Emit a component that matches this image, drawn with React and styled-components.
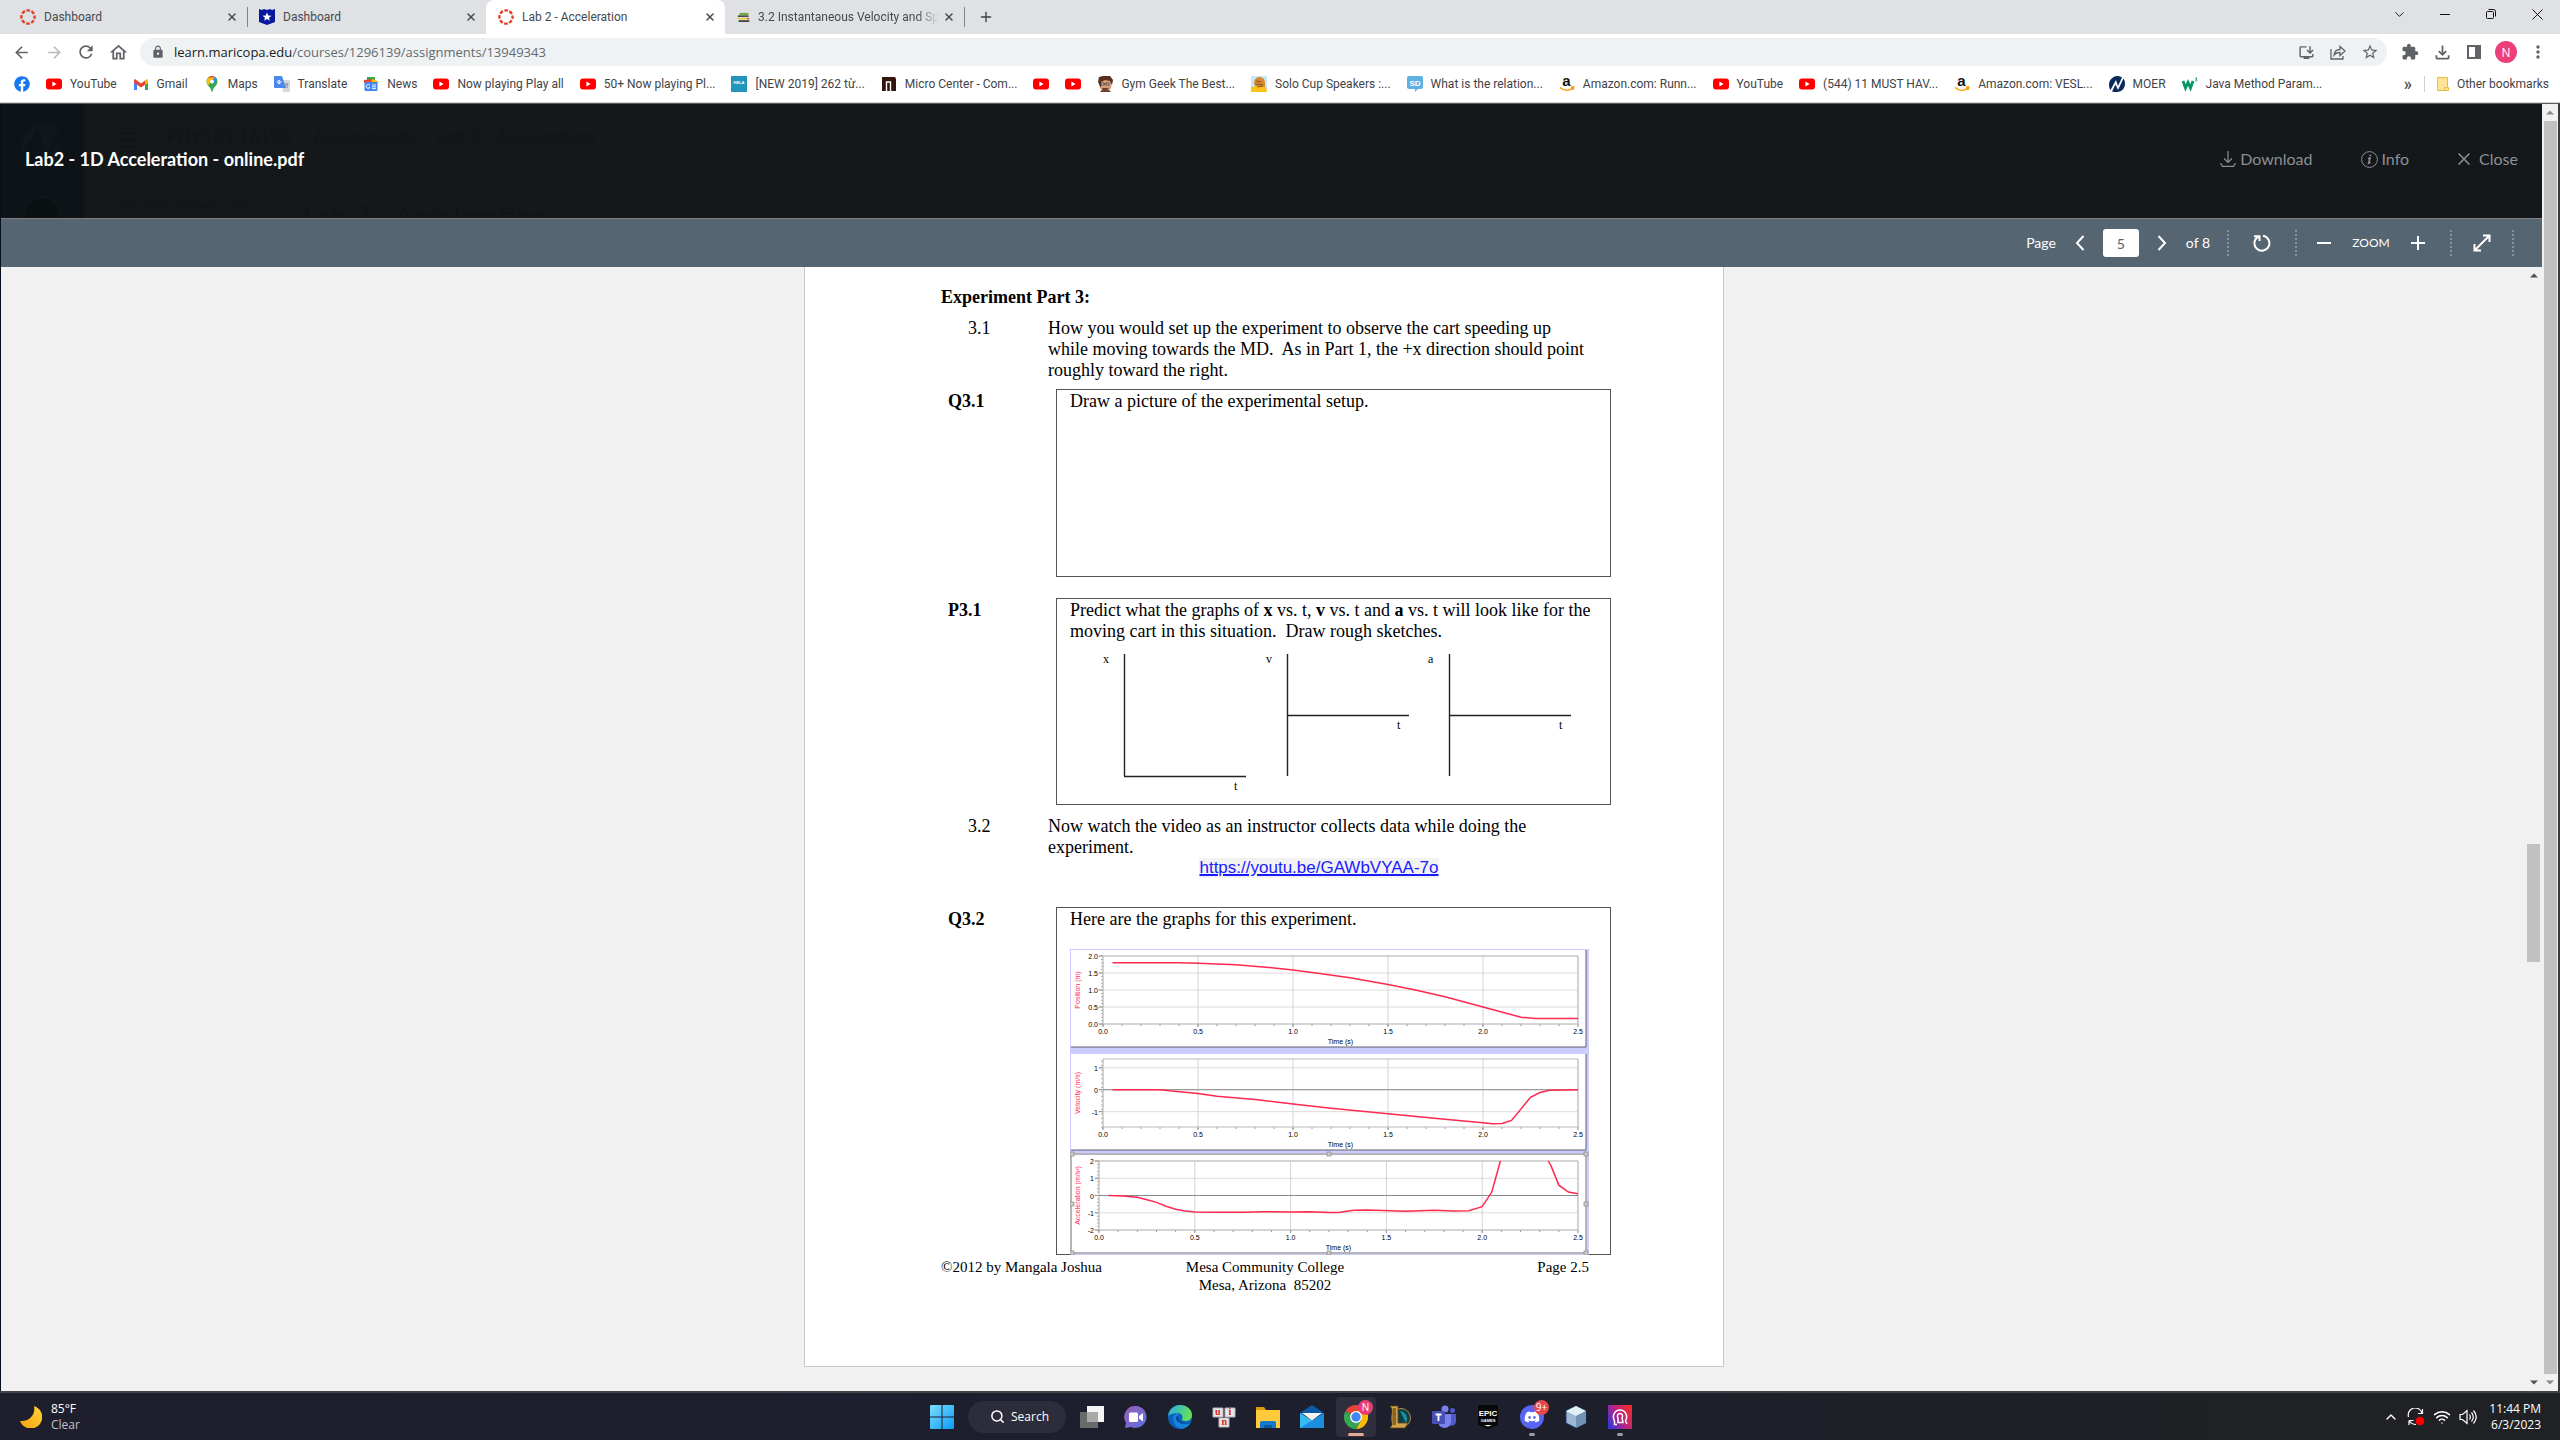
import React from 'react';

import styled, { createGlobalStyle } from 'styled-components';
import {
  MdArrowBack,
  MdArrowForward,
  MdExtension,
  MdInstallDesktop,
  MdLock,
  MdMoreVert,
  MdOutlineFileDownload,
  MdOutlineHome,
  MdRefresh,
  MdStarBorder,
} from 'react-icons/md';
import { FaDiscord, FaFacebook } from 'react-icons/fa';
import { ChevronDown, ChevronUp, Plus, Search, Wifi, X } from 'lucide-react';

const uiFont = '"Open Sans", "Noto Sans", sans-serif';
const tabFont = 'Roboto, "Noto Sans", sans-serif';
const latoFont = 'Lato, "Open Sans", sans-serif';
const serifFont = '"Liberation Serif", "Times New Roman", serif';
const sansFont = '"Liberation Sans", Arial, sans-serif';

const GlobalStyle = createGlobalStyle`
  * {
    box-sizing: border-box;
  }

  body {
    margin: 0;
    font-family: ${uiFont};
    font-size: 12px;
    overflow: hidden;
  }

  button {
    border: 0;
    padding: 0;
    background: none;
    color: inherit;
    font: inherit;
  }

  a {
    color: inherit;
    text-decoration: none;
  }

  h1, p {
    margin: 0;
    font-size: inherit;
  }
`;

const Screen = styled.div`
  display: flex;
  flex-direction: column;
  height: 100vh;
`;

/* ---------- browser chrome ---------- */

const TabStrip = styled.div`
  display: flex;
  align-items: stretch;
  height: 34px;
  padding-left: 8px;
  background: #dfe1e5;
  font-family: ${tabFont};
`;

const Tab = styled.div`
  display: flex;
  align-items: center;
  gap: 8px;
  width: 239px;
  padding: 0 7px 0 12px;
  border-radius: 8px 8px 0 0;
  background: ${({ $active }) => ($active ? '#fff' : 'none')};
  color: #45494d;
`;

const TabTitle = styled.a`
  flex: 1;
  margin-right: -6px;
  white-space: nowrap;
  mask-image: ${({ $fade }) => ($fade ? 'linear-gradient(90deg, #000 88%, transparent)' : 'none')};
`;

const TabDivider = styled.span`
  align-self: center;
  width: 1px;
  height: 20px;
  margin-right: -1px;
  background: #808387;
`;

const IconButton = styled.button`
  display: flex;
  align-items: center;
  justify-content: center;
  width: ${({ $width }) => $width || 16}px;
  height: 28px;
  flex: none;
`;

const NewTab = styled(IconButton)`
  align-self: center;
  margin-left: 8px;
  color: #3c4043;
`;

const WindowControls = styled.div`
  display: flex;
  margin-left: auto;
  color: #111;
`;

const Toolbar = styled.div`
  display: flex;
  align-items: center;
  height: 36px;
  padding: 0 6px 0 5px;
  background: #fff;
  color: #5f6368;
`;

const AddressBar = styled.div`
  display: flex;
  flex: 1;
  align-items: center;
  height: 28px;
  margin: 0 7px 0 6px;
  padding: 0 1px 0 11px;
  border-radius: 14px;
  background: #eef2f3;
`;

const Address = styled.span`
  display: flex;
  flex: 1;
  padding-left: 9px;
  color: #666a6e;
  font-size: 13px;

  b {
    color: #202124;
    font-weight: 400;
  }
`;

const Avatar = styled.span`
  display: flex;
  align-items: center;
  justify-content: center;
  width: 22px;
  height: 22px;
  border-radius: 50%;
  background: #ec407a;
  color: #fff;
`;

const Bookmarks = styled.nav`
  display: flex;
  align-items: center;
  gap: 16px;
  height: 33px;
  padding: 0 11px 4px 14px;
  border-bottom: 1px solid #cfd1d3;
  background: #fff;
  color: #3f4347;
  font-family: ${tabFont};
`;

const Bookmark = styled.a`
  display: flex;
  align-items: center;
  gap: 8px;
  white-space: nowrap;

  svg {
    flex: none;
    overflow: visible;
  }
`;

const BookmarkOverflow = styled.button`
  margin-left: auto;
  font-size: 18px;
  line-height: 16px;
`;

const BookmarkDivider = styled.span`
  width: 1px;
  height: 16px;
  margin: 0 -4px;
  background: #cfd1d3;
`;

/* ---------- page ---------- */

const Page = styled.div`
  display: flex;
  flex: 1;
  min-height: 0;
  border-top: 1px solid #5c5e60;
  border-right: 2px solid #3a3a3c;
  background: #f1f1f1;
`;

const Viewer = styled.main`
  display: flex;
  flex: 1;
  flex-direction: column;
  min-width: 0;
  border-left: 1px solid #04101c;
`;

const ViewerHeader = styled.header`
  position: relative;
  display: flex;
  align-items: center;
  height: 115px;
  padding: 0 24px 4px;
  overflow: hidden;
  border-bottom: 1px solid #837f80;
  background: #14181b;
  color: #8d8f91;
  font: 16px/20px ${latoFont};
`;

/* the course page that stays faintly visible under the overlay */
const Backdrop = styled.div`
  position: absolute;
  inset: 0;
  color: #111517;

  svg {
    position: absolute;
    left: 0;
    top: 0;
  }
`;

const Crumbs = styled.div`
  position: absolute;
  left: 166px;
  top: 20px;
  font-size: 18px;
  line-height: 24px;
  white-space: pre;
`;

const Term = styled.div`
  position: absolute;
  left: 120px;
  top: 92px;
  font-size: 12px;
  font-style: italic;
`;

const BackdropTitle = styled.div`
  position: absolute;
  left: 302px;
  top: 94px;
  font-size: 28px;
  line-height: 36px;
`;

const FileName = styled.h1`
  position: relative;
  flex: 1;
  color: #fff;
  font-size: 18px;
  font-weight: 700;
`;

const HeaderActions = styled.div`
  position: relative;
  display: flex;
  gap: 48px;
`;

const HeaderAction = styled.button`
  display: flex;
  align-items: center;
  gap: ${({ $gap }) => $gap || 4}px;
`;

const ViewerToolbar = styled.div`
  display: flex;
  align-items: center;
  justify-content: flex-end;
  height: 48px;
  padding-right: 28px;
  background: #566572;
  color: #fff;
  font: 14px/20px ${latoFont};
`;

const PageLabel = styled.label`
  margin-right: 11px;
`;

const PageInput = styled.input`
  width: 36px;
  height: 28px;
  margin: 0 10px;
  padding: 0;
  border: 0;
  border-radius: 3px;
  color: #566572;
  font: 14px/20px ${latoFont};
  text-align: center;
`;

const PageCount = styled.span`
  margin: 0 17px 0 11px;
`;

const ZoomLabel = styled.span`
  width: 38px;
  margin: 0 12px;
  font-size: 12px;
  text-align: center;
`;

const Dots = styled.span`
  height: 26px;
  margin-left: ${({ $before }) => $before || 0}px;
  margin-right: ${({ $after }) => $after || 0}px;
  border-left: 2px dotted #87929b;
`;

const PdfPane = styled.div`
  display: flex;
  flex: 1;
  min-height: 0;
`;

const SheetScroller = styled.div`
  flex: 1;
  padding-left: 2px;
  overflow: hidden;
`;

const Sheet = styled.article`
  width: 920px;
  min-height: 1100px;
  margin: 0 auto;
  padding: 20px 112px 0 136px;
  border: 1px solid #c9c9c9;
  border-top: 0;
  background: #fff;
  color: #000;
  font: 18px/21px ${serifFont};
`;

const Heading = styled.h1`
  font-weight: 700;
`;

const Step = styled.section`
  display: grid;
  grid-template-columns: 80px 550px;
  margin-top: ${({ $top }) => $top}px;
  padding-left: 27px;
`;

const Question = styled.section`
  display: grid;
  grid-template-columns: 108px 555px;
  margin-top: ${({ $top }) => $top}px;
  padding-left: 7px;

  strong {
    padding-top: 2px;
  }
`;

const Answer = styled.div`
  height: ${({ $height }) => $height}px;
  padding: 1px 12px 0 13px;
  border: 1px solid #555;

  svg {
    display: block;
  }
`;

const VideoLink = styled.a`
  justify-self: center;
  grid-column: 2;
  margin-left: -8px;
  background: #f2f2f2;
  color: #1a1aff;
  font: 17px/20px ${sansFont};
  text-decoration: underline;
  text-decoration-thickness: 2px;
`;

const Footer = styled.footer`
  display: grid;
  grid-template-columns: 1fr auto 1fr;
  padding-right: 22px;
  margin-top: 3px;
  font-size: 15px;
  line-height: 18px;
  text-align: center;

  span:first-child {
    text-align: left;
  }

  span:last-child {
    text-align: right;
  }
`;

const Scrollbar = styled.div`
  display: flex;
  flex-direction: column;
  align-items: center;
  width: ${({ $width }) => $width}px;
  padding: 6px 0;
  background: #f1f1f1;
  color: ${({ $arrow }) => $arrow || '#505050'};
`;

/* the thumb sits between two spacers that share the rest of the track */
const Track = styled.div`
  display: flex;
  flex: 1;
  flex-direction: column;
  margin: 6px 0;

  &::before {
    content: '';
    flex: ${({ $before }) => $before || 0};
  }

  &::after {
    content: '';
    flex: ${({ $after }) => $after || 0};
  }
`;

const Thumb = styled.div`
  flex: ${({ $size }) => $size};
  width: 13px;
  background: #c1c1c1;
`;

/* ---------- taskbar ---------- */

const Taskbar = styled.footer`
  display: grid;
  grid-template-columns: 1fr auto 1fr;
  align-items: center;
  height: 49px;
  border-top: 2px solid #434448;
  background: linear-gradient(90deg, #1f1e2d, #1d1f2d 55%, #202124 90%);
  color: #fff;
  font-size: 12px;
  line-height: 16px;
`;

const Weather = styled.button`
  display: flex;
  align-items: center;
  gap: 9px;
  padding-left: 20px;
  text-align: left;

  small {
    display: block;
    color: #c3c3c8;
    font-size: 12px;
  }
`;

const Apps = styled.div`
  display: flex;
  align-items: center;
  gap: 4px;
  padding-left: 2px;
`;

const SearchPill = styled.button`
  display: flex;
  align-items: center;
  gap: 6px;
  width: 98px;
  height: 32px;
  margin: 0 2px;
  padding-left: 22px;
  border-radius: 16px;
  background: #2c2c3a;
`;

const AppButton = styled.button`
  position: relative;
  display: flex;
  align-items: center;
  justify-content: center;
  width: 40px;
  height: 40px;
  border-radius: 4px;
  background: ${({ $active }) => ($active ? '#2e2e3c' : 'none')};

  &::after {
    content: '';
    position: absolute;
    bottom: 1px;
    left: 50%;
    width: ${({ $active }) => ($active ? 16 : 6)}px;
    height: 3px;
    border-radius: 2px;
    background: ${({ $active, $running }) => ($active ? '#e3a896' : $running ? '#9b9ba3' : 'none')};
    transform: translateX(-50%);
  }
`;

const Badge = styled.span`
  position: absolute;
  top: 3px;
  right: 3px;
  width: 15px;
  height: 15px;
  border-radius: 8px;
  background: ${({ $color }) => $color};
  color: #fff;
  font-size: 10px;
  line-height: 15px;
  text-align: center;
`;

const Tray = styled.div`
  display: flex;
  align-items: center;
  justify-content: flex-end;
  gap: 8px;
  padding-right: 19px;
`;

const Clock = styled.time`
  margin-left: 4px;
  text-align: right;
`;

/* ---------- icons ---------- */

const CanvasIcon = () => (
  <svg width="16" height="16" viewBox="0 0 16 16">
    <circle cx="8" cy="8" r="6.6" fill="none" stroke="#e13f29" strokeWidth="2.4" strokeDasharray="3.6 1.58" strokeDashoffset="1.8" />
  </svg>
);

const ShieldStarIcon = () => (
  <svg width="16" height="16" viewBox="0 0 16 16">
    <path d="M0 0l3 1 2-1 3 1 3-1 2 1 3-1v13l-8 3-8-3z" fill="#06189b" />
    <path d="M8 3.500l1.300 3 3.200.2-2.500 2 .8 3.100L8 10.100l-2.800 1.700.8-3.100-2.500-2 3.200-.2z" fill="#fff" />
  </svg>
);

const BooksIcon = () => (
  <svg width="16" height="16" viewBox="0 0 16 16">
    <path d="M3 3h11v3H3z" fill="#6fae3c" />
    <path d="M1 6h13v2H1z" fill="#4b4b4b" />
    <path d="M0 9h12v2H0z" fill="#e9d23c" />
    <path d="M2 12h13v2H2z" fill="#333" />
    <path d="M12 9h3v2h-3z" fill="#d46a43" />
  </svg>
);

const YouTubeIcon = () => (
  <svg width="16" height="16" viewBox="0 0 16 16">
    <rect y="2.500" width="16" height="11" rx="3" fill="#f00" />
    <path d="M6.400 5.500v5l4.200-2.500z" fill="#fff" />
  </svg>
);

const GmailIcon = () => (
  <svg width="16" height="16" viewBox="0 0 16 16">
    <path d="M1 4v10h3V7z" fill="#4285f4" />
    <path d="M15 4v10h-3V7z" fill="#34a853" />
    <path d="M12 4.500l2-1.500 1 1v3l-3 2z" fill="#fbbc04" />
    <path d="M1 4l1-1 2 1.500L8 7.500l4-3V8.700L8 11.500 1 6.500z" fill="#ea4335" />
  </svg>
);

const MapsIcon = () => (
  <svg width="16" height="16" viewBox="0 0 16 16">
    <path d="M8 0a5.500 5.500 0 0 0-5.500 5.500c0 3 2.200 4.500 3.700 6.500.9 1.200 1.200 4 1.800 4s.9-2.800 1.800-4c1.500-2 3.700-3.500 3.700-6.500A5.500 5.500 0 0 0 8 0z" fill="#34a853" />
    <path d="M8 0a5.500 5.500 0 0 0-4.200 2L6.500 4.500 11 .9A5.500 5.500 0 0 0 8 0z" fill="#ea4335" />
    <path d="M11 .9L4.200 9.200 3 7.500A5 5 0 0 1 3.800 2z" fill="#fbbc04" />
    <path d="M11 .9L8 4.500l2 2.500 3-3.500A5 5 0 0 0 11 .9z" fill="#4285f4" />
    <circle cx="8" cy="5.500" r="1.900" fill="#fff" />
  </svg>
);

const TranslateIcon = () => (
  <svg width="16" height="16" viewBox="0 0 16 16">
    <path d="M7 4h8a1 1 0 0 1 1 1v10a1 1 0 0 1-1 1H9z" fill="#d5d9de" />
    <path d="M1 0h7l4 12H1a1 1 0 0 1-1-1V1a1 1 0 0 1 1-1z" fill="#4a88ee" />
    <path d="M7.500 5.800H5v1.200h1.300A1.600 1.600 0 1 1 5 4.400c.5 0 .9.200 1.100.4" fill="none" stroke="#fff" />
    <path d="M10.500 8h4M12.500 7v1m1.300 0c-.4 1.800-1.500 3-2.500 3.800m.200-2.500c.6 1 1.500 2 2.500 2.500" fill="none" stroke="#7b8188" strokeWidth=".8" />
  </svg>
);

const NewsIcon = () => (
  <svg width="16" height="16" viewBox="0 0 16 16">
    <path d="M4 1h8v5H4z" fill="#34a853" />
    <path d="M1 4l9-1 1 4H1z" fill="#ea4335" />
    <path d="M9 3l6 2-1 4H8z" fill="#fbbc04" />
    <rect x="1.500" y="6" width="13" height="9" rx="1" fill="#4285f4" />
    <path d="M7 9.500a2 2 0 1 0 0 2H5.500M9 9h4m-4 1.800h4M9 12.600h4" fill="none" stroke="#fff" strokeWidth=".9" />
  </svg>
);

const HelaIcon = () => (
  <svg width="16" height="16" viewBox="0 0 16 16">
    <path d="M0 0h16v16H0z" fill="#2196bd" />
    <text x="8" y="8" fill="#fff" fontFamily={sansFont} fontSize="4" fontWeight="700" textAnchor="middle">HELA</text>
  </svg>
);

const MicroCenterIcon = () => (
  <svg width="16" height="16" viewBox="0 0 16 16">
    <path d="M1 1h13l1 2v12H1z" fill="#34150c" />
    <path d="M5.500 15V6h4v9" fill="none" stroke="#fff" strokeWidth="1.400" />
  </svg>
);

const GeekIcon = () => (
  <svg width="16" height="16" viewBox="0 0 16 16">
    <path d="M3 2h10l2 4-1 6-3 4H5L2 9z" fill="#d69c74" />
    <path d="M1 6L2 1l4-1h7l3 4-1 5-2-4-5-1-4 2v6z" fill="#58301d" />
    <path d="M4 7h3v2H4zm5 0h3v2H9zM7 8h2" fill="#eee" stroke="#333" strokeWidth=".8" />
    <path d="M5 12h7l-2 2H6zM3 16l2-2h7l2 2z" fill="#714028" />
  </svg>
);

const SpeakerIcon = () => (
  <svg width="16" height="16" viewBox="0 0 16 16">
    <path d="M0 0h16v16H0z" fill="#c9e8f8" />
    <path d="M3 7a5 5 0 0 1 11-1v6H5z" fill="#d58b35" />
    <path d="M0 11l6-1 9 1 1 5H0z" fill="#fcc31b" />
    <path d="M5 5l5 1M4 8l8 1m-6 2l6-1" stroke="#94581d" />
  </svg>
);

const SdIcon = () => (
  <svg width="16" height="16" viewBox="0 0 16 16">
    <path d="M2 0h12a2 2 0 0 1 2 2v9a2 2 0 0 1-2 2h-3l-3 3v-3H2a2 2 0 0 1-2-2V2a2 2 0 0 1 2-2z" fill="#5fb0e3" />
    <text x="8" y="9.500" fill="#fff" fontFamily={sansFont} fontSize="8" fontWeight="700" textAnchor="middle">SD</text>
  </svg>
);

const AmazonIcon = () => (
  <svg width="16" height="16" viewBox="0 0 16 16">
    <text x="7.500" y="10" fill="#111" fontFamily={sansFont} fontSize="15" fontWeight="700" textAnchor="middle">a</text>
    <path d="M1 11.500c4 3.500 9 3.500 12.500.8M12 11.300l2.600-.3-.6 2.800" fill="none" stroke="#f90" strokeWidth="1.600" />
  </svg>
);

const MoerIcon = () => (
  <svg width="16" height="16" viewBox="0 0 16 16">
    <path d="M8 0C3 .5 0 4.500 0 9c0 2 .6 3.600 1.500 5L7 4l2 6 4-8.500C11.500.5 10 0 8 0z" fill="#0d2a5c" />
    <path d="M14.500 2.500L9 14 6.500 8.500 3 15.500c1.500.5 3 .5 5 .5 5 0 8-4 8-8.500 0-2-.5-3.500-1.500-5z" fill="#0d2a5c" />
  </svg>
);

const W3Icon = () => (
  <svg width="16" height="16" viewBox="0 0 16 16">
    <path d="M1 5l2.500 7L6 6.500 8.500 12l2.500-7" fill="none" stroke="#059862" strokeWidth="2.800" />
    <path d="M13 2h2l-1 1.300c2 .2 1.200 2.200-1 1.500" fill="none" stroke="#059862" strokeWidth=".8" />
  </svg>
);

const FolderIcon = () => (
  <svg width="12" height="14" viewBox="0 0 12 14">
    <path d="M.5.500h10v10h1v3h-11z" fill="#ffe493" stroke="#e2bd45" />
    <path d="M7.500 13.500v-3h3" fill="none" stroke="#e2bd45" />
  </svg>
);

const ShareIcon = () => (
  <svg width="18" height="18" viewBox="0 0 18 18" fill="none" stroke="currentColor" strokeWidth="1.300">
    <path d="M2 6v10h12v-3" />
    <path d="M5 12c.5-3.500 2.500-5.500 6-5.500V3.500l5 4.500-5 4.500v-3c-2.800 0-4.600.8-6 2.500z" />
  </svg>
);

const RestoreIcon = () => (
  <svg width="10" height="10" viewBox="0 0 10 10" fill="none" stroke="currentColor">
    <rect x=".5" y="2.500" width="7" height="7" rx="1" />
    <path d="M2.500 .5h5a2 2 0 0 1 2 2v5" />
  </svg>
);

const SidePanelIcon = () => (
  <svg width="16" height="16" viewBox="0 0 16 16">
    <path d="M2 2h12v12H2z" fill="none" stroke="currentColor" strokeWidth="2" />
    <path d="M9 2h5v12H9z" fill="currentColor" />
  </svg>
);

const DownloadIcon = () => (
  <svg width="16" height="18" viewBox="0 0 16 18" fill="none" stroke="currentColor" strokeWidth="1.200">
    <path d="M8 1v11M4 8.500l4 4 4-4M.5 13l2 3.400h11l2-3.400" />
  </svg>
);

const InfoIcon = () => (
  <svg width="17" height="17" viewBox="0 0 17 17" fill="none" stroke="currentColor">
    <circle cx="8.500" cy="8.500" r="7.900" />
    <path d="M7 7.500l2-.5-1.300 5 1.800-.8" strokeWidth="1.600" />
    <circle cx="9.300" cy="4.500" r=".6" fill="currentColor" />
  </svg>
);

const StrokeIcon = ({ size = 18, d, width = 2 }) => (
  <svg width={size} height={size} viewBox="0 0 18 18" fill="none" stroke="currentColor" strokeWidth={width}>
    <path d={d} />
  </svg>
);

const Arrow = ({ down }) => (
  <svg width="8" height="5" viewBox="0 0 8 5">
    <path d={down ? 'M0 .5h8L4 4.500z' : 'M0 4.500h8L4 .5z'} fill="currentColor" />
  </svg>
);

const MoonIcon = () => (
  <svg width="22" height="22" viewBox="0 0 22 22">
    <defs>
      <linearGradient id="moon" x1="0" y1="1" x2="1" y2="0">
        <stop offset="0" stopColor="#f7a308" />
        <stop offset="1" stopColor="#ffd33c" />
      </linearGradient>
    </defs>
    <path d="M14 0a11.500 11.500 0 1 1-14 15c8 1 16-5 14-15z" fill="url(#moon)" />
  </svg>
);

const WindowsIcon = () => (
  <svg width="24" height="24" viewBox="0 0 24 24">
    <defs>
      <linearGradient id="win" x1="0" y1="0" x2="1" y2="1">
        <stop offset="0" stopColor="#7ddcff" />
        <stop offset="1" stopColor="#0a9cf5" />
      </linearGradient>
    </defs>
    <path d="M0 1a1 1 0 0 1 1-1h10.500v11.500H0zM12.500 0H23a1 1 0 0 1 1 1v10.500H12.500zM0 12.500h11.500V24H1a1 1 0 0 1-1-1zM12.500 12.500H24V23a1 1 0 0 1-1 1H12.500z" fill="url(#win)" />
  </svg>
);

const TaskViewIcon = () => (
  <svg width="24" height="24" viewBox="0 0 24 24">
    <path d="M7 1h17v16H7z" fill="#f4f4f4" />
    <path d="M0 7h18v16H0z" fill="#6a6a6c" />
    <path d="M7 7h11v10H7z" fill="#a9a9a9" />
  </svg>
);

const ChatIcon = () => (
  <svg width="24" height="24" viewBox="0 0 24 24">
    <defs>
      <linearGradient id="chat" x1="0" y1="0" x2="1" y2="1">
        <stop offset="0" stopColor="#9a5fb5" />
        <stop offset="1" stopColor="#5a6fe0" />
      </linearGradient>
    </defs>
    <path d="M12 1a11 11 0 1 1-5 21L1 23l1-5A11 11 0 0 1 12 1z" fill="url(#chat)" />
    <rect x="5" y="7.500" width="9" height="9.500" rx="1.500" fill="#fff" />
    <path d="M15 11l4-3v8.500l-4-3z" fill="#fff" />
  </svg>
);

const EdgeIcon = () => (
  <svg width="24" height="24" viewBox="0 0 24 24">
    <defs>
      <linearGradient id="edge" x1="0" y1="0" x2="1" y2=".3">
        <stop offset="0" stopColor="#2aa9e8" />
        <stop offset="1" stopColor="#63e05c" />
      </linearGradient>
    </defs>
    <circle cx="12" cy="12" r="12" fill="#0b62bd" />
    <path d="M0 11C1 4 6 0 12 0c7 0 12 4.500 12 10 0 4-3 6-6.500 6-2.500 0-4-1-3.500-2 1.500-2.500 0-6-5-6-4 0-8 2-9 3z" fill="url(#edge)" />
    <path d="M9 8c-3 1-5 5-3 10 2 4 6 6 8 5.800 4-.6 7-3 8.500-5.800-7 3.500-14 0-12.500-7 0-1 1-2 1-2z" fill="#1584dc" />
    <path d="M10 10.500c-1 5 4 10 12.500 7.500C17 20 9 19 8 13c0-1 1-2 2-2.500z" fill="#0a3f86" />
  </svg>
);

const UnikeyIcon = () => (
  <svg width="24" height="24" viewBox="0 0 24 24" fontFamily={serifFont} fontSize="10" fontWeight="700">
    <path d="M1 3h10v9H1zM13 3h10v9H13zM7 13h10v9H7z" fill="#e8e8ea" stroke="#b5b5b8" />
    <text x="3" y="10" fill="#e02020">u</text>
    <text x="16.500" y="10" fill="#e02020">i</text>
    <text x="9.500" y="20" fill="#e02020">n</text>
  </svg>
);

const ExplorerIcon = () => (
  <svg width="24" height="24" viewBox="0 0 24 24">
    <path d="M0 2h8l2 3v4H0z" fill="#dd9a09" />
    <path d="M0 5h24v18H0z" fill="#ffcb3d" />
    <path d="M4 23v-5a2 2 0 0 1 2-2h12a2 2 0 0 1 2 2v5z" fill="#1579cc" />
    <path d="M8 20h8v3H8z" fill="#0b5aa5" />
  </svg>
);

const MailIcon = () => (
  <svg width="24" height="24" viewBox="0 0 24 24">
    <path d="M0 8l12-8 12 8v2H0z" fill="#0b5aa8" />
    <path d="M0 8l24 15H0z" fill="#35bbf2" />
    <path d="M24 8L0 23h24z" fill="#1a8fe0" />
    <path d="M2 8h20l-10 7.500z" fill="#f3f5f7" />
  </svg>
);

const ChromeIcon = () => (
  <svg width="24" height="24" viewBox="0 0 24 24">
    <path d="M12 12L1.600 6A12 12 0 0 1 22.400 6H12z" fill="#ea4335" />
    <path d="M1.600 6L12 24A12 12 0 0 1 1.600 6z" fill="#34a853" />
    <path d="M22.400 6A12 12 0 0 1 12 24l5.200-9L12 6z" fill="#fbbc04" />
    <path d="M1.600 6l5.200 9L12 24l5.200-9L12 12z" fill="#34a853" />
    <circle cx="12" cy="12" r="6" fill="#fff" />
    <circle cx="12" cy="12" r="4.700" fill="#4285f4" />
  </svg>
);

const LeagueIcon = () => (
  <svg width="24" height="24" viewBox="0 0 24 24">
    <circle cx="13" cy="13" r="9.500" fill="#0c3f4c" stroke="#b98c3c" />
    <path d="M12 6a8 8 0 0 1 6 12z" fill="#1b8f95" />
    <path d="M2 1h8v17h10l-3 5H2l2-3V4z" fill="#d2a348" stroke="#5d4118" strokeWidth=".8" />
    <path d="M5 3h3v17H5z" fill="#8b6425" />
  </svg>
);

const TeamsIcon = () => (
  <svg width="24" height="24" viewBox="0 0 24 24">
    <circle cx="13" cy="4" r="3.500" fill="#7b83eb" />
    <circle cx="20.500" cy="5.500" r="2.500" fill="#5059c9" />
    <path d="M17 9h7v8a4.500 4.500 0 0 1-7 3z" fill="#5059c9" />
    <path d="M7 9h12v8a6.500 6.500 0 0 1-12 3z" fill="#7b83eb" />
    <rect y="6" width="13" height="13" rx="1" fill="#4650b8" />
    <path d="M3.500 9.500h6M6.500 9.500V16" stroke="#fff" strokeWidth="1.800" />
  </svg>
);

const EpicIcon = () => (
  <svg width="22" height="24" viewBox="0 0 22 24">
    <path d="M2 0h18a1 1 0 0 1 1 1v19l-10 4-10-4V1a1 1 0 0 1 1-1z" fill="#08080a" />
    <text x="11" y="11" fill="#fff" fontFamily={sansFont} fontSize="8" fontWeight="700" textAnchor="middle">EPIC</text>
    <text x="11" y="17" fill="#fff" fontFamily={sansFont} fontSize="4" fontWeight="700" textAnchor="middle">GAMES</text>
    <path d="M7 20h8l-4 1.500z" fill="#fff" />
  </svg>
);

const DiscordIcon = styled.span`
  display: flex;
  align-items: center;
  justify-content: center;
  width: 24px;
  height: 24px;
  border-radius: 50%;
  background: #5865f2;
`;

const CubeIcon = () => (
  <svg width="24" height="24" viewBox="0 0 24 24">
    <path d="M12 1l10 5v12l-10 5-10-5V6z" fill="#9db8d6" stroke="#17366b" strokeWidth=".8" />
    <path d="M12 1l10 5-10 5L2 6z" fill="#e2f1f4" />
    <path d="M12 11l10-5v12l-10 5z" fill="#7192b5" />
  </svg>
);

const HeadIcon = () => (
  <svg width="24" height="24" viewBox="0 0 24 24">
    <defs>
      <linearGradient id="head" x1="0" y1=".8" x2="1" y2=".2">
        <stop offset="0" stopColor="#3a35d8" />
        <stop offset=".45" stopColor="#b0258a" />
        <stop offset="1" stopColor="#f32a2a" />
      </linearGradient>
    </defs>
    <path d="M0 0h24v24H0z" fill="url(#head)" />
    <g fill="none" stroke="#fff" strokeWidth="1.500">
      <path d="M9 19.500H6.500V16C3.500 10.500 7 5 12 5s8.500 5.500 5.500 11l1.500 3" />
      <path d="M10 17.500V13c-1.500-2.500 0-4.500 2-4.500s3.500 2 2 4.500l1 4.500z" />
    </g>
  </svg>
);

const SyncIcon = () => (
  <svg width="18" height="18" viewBox="0 0 18 18" fill="none" stroke="#fff" strokeWidth="1.200">
    <path d="M1.500 9A7 7 0 0 1 15 5M15.500 1v4.500H11M2 12.500h4.500M2 12.500V17M2.500 13c1.500 2.500 4 3.500 6.500 3.500" />
    <circle cx="13" cy="13" r="4.300" fill="#f00" stroke="none" />
  </svg>
);

const VolumeIcon = () => (
  <svg width="18" height="16" viewBox="0 0 18 16" fill="none" stroke="#fff" strokeWidth="1.200">
    <path d="M1 5.500h2.500L8 1.500v13l-4.500-4H1zM10.500 5.500c1 1.500 1 3.500 0 5M12.500 3.500c2.200 2.700 2.200 6.300 0 9M14.500 1.500c3.400 4 3.400 9 0 13" />
  </svg>
);

/* ---------- data ---------- */

const tabs = [
  { title: 'Dashboard', icon: <CanvasIcon />, divider: true },
  { title: 'Dashboard', icon: <ShieldStarIcon /> },
  { title: 'Lab 2 - Acceleration', icon: <CanvasIcon />, active: true },
  { title: '3.2 Instantaneous Velocity and Sp', icon: <BooksIcon />, divider: true, fade: true },
];

const bookmarks = [
  { icon: <FaFacebook size={16} color="#1877f2" />, name: 'Facebook' },
  { icon: <YouTubeIcon />, label: 'YouTube' },
  { icon: <GmailIcon />, label: 'Gmail' },
  { icon: <MapsIcon />, label: 'Maps' },
  { icon: <TranslateIcon />, label: 'Translate' },
  { icon: <NewsIcon />, label: 'News' },
  { icon: <YouTubeIcon />, label: 'Now playing Play all' },
  { icon: <YouTubeIcon />, label: '50+ Now playing Pl...' },
  { icon: <HelaIcon />, label: '[NEW 2019] 262 từ...' },
  { icon: <MicroCenterIcon />, label: 'Micro Center - Com...' },
  { icon: <YouTubeIcon />, name: 'YouTube' },
  { icon: <YouTubeIcon />, name: 'YouTube' },
  { icon: <GeekIcon />, label: 'Gym Geek The Best...' },
  { icon: <SpeakerIcon />, label: 'Solo Cup Speakers :...' },
  { icon: <SdIcon />, label: 'What is the relation...' },
  { icon: <AmazonIcon />, label: 'Amazon.com: Runn...' },
  { icon: <YouTubeIcon />, label: 'YouTube' },
  { icon: <YouTubeIcon />, label: '(544) 11 MUST HAV...' },
  { icon: <AmazonIcon />, label: 'Amazon.com: VESL...' },
  { icon: <MoerIcon />, label: 'MOER' },
  { icon: <W3Icon />, label: 'Java Method Param...' },
];

const sketches = [
  { name: 'x', left: 54, axis: 122 },
  { name: 'v', left: 217, axis: 61 },
  { name: 'a', left: 379, axis: 61 },
];

const apps = [
  { name: 'Task view', icon: <TaskViewIcon /> },
  { name: 'Chat', icon: <ChatIcon /> },
  { name: 'Edge', icon: <EdgeIcon /> },
  { name: 'UniKey', icon: <UnikeyIcon /> },
  { name: 'File Explorer', icon: <ExplorerIcon /> },
  { name: 'Mail', icon: <MailIcon /> },
  { name: 'Chrome', icon: <ChromeIcon />, active: true, badge: 'N', badgeColor: '#e83e75' },
  { name: 'League of Legends', icon: <LeagueIcon /> },
  { name: 'Teams', icon: <TeamsIcon /> },
  { name: 'Epic Games', icon: <EpicIcon /> },
  {
    name: 'Discord',
    icon: (
      <DiscordIcon>
        <FaDiscord size={16} />
      </DiscordIcon>
    ),
    running: true,
    badge: '9+',
    badgeColor: '#e8484c',
  },
  { name: 'Cube', icon: <CubeIcon /> },
  { name: 'Proctor', icon: <HeadIcon />, running: true },
];

const charts = [
  {
    name: 'Position (m)',
    box: [0, 98],
    plot: { left: 33, top: 7, bottom: 75, min: 0, max: 2 },
    ticks: [['2.0', 2], ['1.5', 1.5], ['1.0', 1], ['0.5', 0.5], ['0.0', 0]],
    minor: 0.1,
    lines: [
      [[0.05, 1.8], [0.4, 1.8], [0.5, 1.79], [0.7, 1.74], [0.9, 1.65], [1, 1.59], [1.15, 1.48], [1.3, 1.36], [1.5, 1.16], [1.65, 0.99], [1.8, 0.8], [2, 0.5], [2.2, 0.2], [2.28, 0.16], [2.5, 0.16]],
    ],
  },
  {
    name: 'Velocity (m/s)',
    box: [104, 201],
    plot: { left: 33, top: 110, bottom: 178, min: -1.7, max: 1.4 },
    ticks: [['1', 1], ['0', 0], ['-1', -1]],
    minor: 0.2,
    lines: [
      [[0.05, 0], [0.3, 0], [0.35, -0.05], [0.5, -0.17], [0.6, -0.3], [0.8, -0.45], [1, -0.65], [1.2, -0.84], [1.5, -1.1], [1.8, -1.35], [2, -1.51], [2.05, -1.55], [2.1, -1.54], [2.15, -1.4], [2.25, -0.35], [2.3, -0.13], [2.35, -0.02], [2.5, 0]],
    ],
  },
  {
    name: 'Acceleration (m/s²)',
    box: [205, 304],
    plot: { left: 29, top: 212, bottom: 281, min: -2, max: 2 },
    ticks: [['2', 2], ['1', 1], ['0', 0], ['-1', -1], ['-2', -2]],
    minor: 0.2,
    selected: true,
    lines: [
      [[0.05, 0], [0.13, -0.03], [0.2, -0.1], [0.25, -0.25], [0.3, -0.4], [0.35, -0.62], [0.4, -0.8], [0.45, -0.9], [0.5, -0.95], [0.6, -0.97], [0.75, -0.97], [0.85, -0.94], [1, -0.95], [1.1, -0.94], [1.2, -0.98], [1.25, -0.98], [1.33, -0.85], [1.4, -0.84], [1.6, -0.92], [1.75, -0.85], [1.85, -0.9], [1.93, -0.88], [2, -0.65], [2.05, 0.2], [2.095, 2]],
      [[2.345, 2], [2.36, 1.7], [2.4, 0.6], [2.45, 0.2], [2.5, 0.1]],
    ],
  },
];

const plotRight = 508;

const range = (from, to, step) =>
  Array.from({ length: Math.floor((to - from) / step + 0.01) + 1 }, (_, i) => from + i * step);

const AxisName = styled.text`
  fill: #ff2850;
`;

const Chart = ({ name, box, plot, ticks, minor, lines, selected }) => {
  const x = t => plot.left + (t / 2.5) * (plotRight - plot.left);
  const y = v => plot.bottom - ((v - plot.min) / (plot.max - plot.min)) * (plot.bottom - plot.top);
  const middle = (plot.top + plot.bottom) / 2;

  return (
    <g>
      <rect x="1" y={box[0] + 1} width="515" height={box[1] - box[0] - 1} fill="#fff" />
      {selected ? (
        <rect x="1" y={box[0]} width="515" height={box[1] - box[0]} fill="none" stroke="#b4b4bc" strokeWidth="2" />
      ) : (
        <path d={`M1 ${box[1]}H516V${box[0] + 1}`} fill="none" stroke="#5c5c68" />
      )}
      {ticks.map(([label, v]) => (
        <g key={label}>
          <path d={`M${plot.left - 5} ${y(v)}H${plotRight}`} stroke="#dcdcdc" />
          <path d={`M${plot.left - 4} ${y(v)}h4`} stroke="#888" />
          <text x={plot.left - 5} y={y(v) + 3} textAnchor="end">
            {label}
          </text>
        </g>
      ))}
      {range(0, 2.5, 0.5).map(t => (
        <g key={t}>
          <path d={`M${x(t)} ${plot.top}V${plot.bottom}`} stroke="#d4d4d4" />
          <path d={`M${x(t)} ${plot.bottom}v3`} stroke="#888" />
          <text x={x(t)} y={plot.bottom + 10} textAnchor="middle">
            {t.toFixed(1)}
          </text>
        </g>
      ))}
      {range(0, 2.4, 0.1).map(t => (
        <path key={t} d={`M${x(t)} ${plot.bottom}v2`} stroke="#999" />
      ))}
      {range(plot.min, plot.max, minor).map(v => (
        <path key={v} d={`M${plot.left - 2} ${y(v)}h2`} stroke="#aaa" />
      ))}
      <path d={`M${plot.left} ${plot.top}H${plotRight}V${plot.bottom}H${plot.left}z`} fill="none" stroke="#bbb" />
      {plot.min < 0 && <path d={`M${plot.left} ${y(0)}H${plotRight}`} stroke="#8a8a8a" />}
      {lines.map((line, i) => (
        <polyline
          key={i}
          points={line.map(([t, v]) => `${x(t)},${y(v)}`).join(' ')}
          fill="none"
          stroke="#ff2850"
          strokeWidth="1.500"
        />
      ))}
      <text x={(plot.left + plotRight) / 2} y={plot.bottom + 20} textAnchor="middle">
        Time (s)
      </text>
      <AxisName transform={`translate(10 ${middle}) rotate(-90)`} textAnchor="middle">
        {name}
      </AxisName>
      {selected &&
        [[2, box[0]], [259, box[0]], [516, box[0]], [2, 255], [516, 255], [2, box[1]], [259, box[1]], [516, box[1]]].map(
          ([cx, cy]) => (
            <rect key={`${cx}-${cy}`} x={cx - 2} y={cy - 2} width="4" height="4" fill="#ccc" stroke="#888" strokeWidth=".7" />
          ),
        )}
    </g>
  );
};

const ChartSvg = styled.svg`
  margin-top: 19px;
  font: 7px ${sansFont};
  fill: #000;
`;

const App = () => {
  return (
    <Screen>
      <GlobalStyle />
      <TabStrip>
        {tabs.map(({ title, icon, active, divider, fade }) => (
          <React.Fragment key={title + Boolean(divider)}>
            <Tab $active={active}>
              {icon}
              <TabTitle href="#" $fade={fade}>
                {title}
              </TabTitle>
              <IconButton aria-label="Close tab">
                <X size={12} strokeWidth={3} />
              </IconButton>
            </Tab>
            {divider && <TabDivider />}
          </React.Fragment>
        ))}
        <NewTab $width={28} aria-label="New tab">
          <Plus size={16} strokeWidth={2} />
        </NewTab>
        <WindowControls>
          <IconButton $width={46} aria-label="Search tabs">
            <ChevronDown size={15} strokeWidth={1.5} />
          </IconButton>
          <IconButton $width={46} aria-label="Minimize">
            <svg width="10" height="10" viewBox="0 0 10 10">
              <path d="M0 5.500h10" stroke="currentColor" />
            </svg>
          </IconButton>
          <IconButton $width={46} aria-label="Restore">
            <RestoreIcon />
          </IconButton>
          <IconButton $width={46} aria-label="Close window">
            <svg width="11" height="11" viewBox="0 0 11 11">
              <path d="M.5.500l10 10M10.500.500l-10 10" stroke="currentColor" />
            </svg>
          </IconButton>
        </WindowControls>
      </TabStrip>

      <Toolbar>
        <IconButton $width={33} aria-label="Back">
          <MdArrowBack size={19} />
        </IconButton>
        <IconButton $width={32} aria-label="Forward">
          <MdArrowForward size={19} color="#b9bbbe" />
        </IconButton>
        <IconButton $width={32} aria-label="Reload">
          <MdRefresh size={20} />
        </IconButton>
        <IconButton $width={32} aria-label="Home">
          <MdOutlineHome size={21} />
        </IconButton>
        <AddressBar>
          <MdLock size={14} />
          <Address>
            <b>learn.maricopa.edu</b>/courses/1296139/assignments/13949343
          </Address>
          <IconButton $width={32} aria-label="Install">
            <MdInstallDesktop size={17} />
          </IconButton>
          <IconButton $width={32} aria-label="Share">
            <ShareIcon />
          </IconButton>
          <IconButton $width={32} aria-label="Bookmark">
            <MdStarBorder size={18} />
          </IconButton>
        </AddressBar>
        <IconButton $width={32} aria-label="Extensions">
          <MdExtension size={18} />
        </IconButton>
        <IconButton $width={32} aria-label="Downloads">
          <MdOutlineFileDownload size={21} />
        </IconButton>
        <IconButton $width={32} aria-label="Side panel">
          <SidePanelIcon />
        </IconButton>
        <IconButton $width={32} aria-label="Profile">
          <Avatar>N</Avatar>
        </IconButton>
        <IconButton $width={32} aria-label="Menu">
          <MdMoreVert size={20} />
        </IconButton>
      </Toolbar>

      <Bookmarks>
        {bookmarks.map(({ icon, label, name }, i) => (
          <Bookmark key={i} href="#" aria-label={name}>
            {icon}
            {label}
          </Bookmark>
        ))}
        <BookmarkOverflow aria-label="More bookmarks">»</BookmarkOverflow>
        <BookmarkDivider />
        <Bookmark href="#">
          <FolderIcon />
          Other bookmarks
        </Bookmark>
      </Bookmarks>

      <Page>
        <Viewer>
          <ViewerHeader>
            <Backdrop aria-hidden="true">
              <svg width="140" height="114" viewBox="0 0 140 114">
                <path d="M0 0h83v114H0z" fill="#0d1316" />
                <path d="M20 50c0-18 8-31 22-31 7 0 12 2 16 5L44 52l-7-28zM47 56l12-20c3 14-2 26-12 26z" fill="#11171a" />
                <circle cx="41" cy="110" r="17" fill="#0b1013" stroke="#13191c" />
                <path d="M114 29h23M114 36h23M114 43h23" stroke="#111517" strokeWidth="2" />
              </svg>
              <Crumbs>PHY121 16198  ›  Assignments  ›  Lab 2 - Acceleration</Crumbs>
              <Term>MC 2023 SUMMR1 CRED</Term>
              <BackdropTitle>Lab 2 - Acceleration</BackdropTitle>
            </Backdrop>
            <FileName>Lab2 - 1D Acceleration - online.pdf</FileName>
            <HeaderActions>
              <HeaderAction>
                <DownloadIcon />
                Download
              </HeaderAction>
              <HeaderAction>
                <InfoIcon />
                Info
              </HeaderAction>
              <HeaderAction $gap={8}>
                <StrokeIcon size={14} d="M2 2l14 14M16 2L2 16" />
                Close
              </HeaderAction>
            </HeaderActions>
          </ViewerHeader>

          <ViewerToolbar>
            <PageLabel htmlFor="page-number">Page</PageLabel>
            <IconButton $width={26} aria-label="Previous page">
              <StrokeIcon d="M12.500 2L6 9l6.500 7" />
            </IconButton>
            <PageInput id="page-number" defaultValue="5" />
            <IconButton $width={26} aria-label="Next page">
              <StrokeIcon d="M5.500 2L12 9l-6.500 7" />
            </IconButton>
            <PageCount>of 8</PageCount>
            <Dots />
            <IconButton $width={66} aria-label="Rotate">
              <StrokeIcon d="M10 1.800a7.500 7.500 0 1 1-5 1M1 2.200h5.500V7" />
            </IconButton>
            <Dots $after={11} />
            <IconButton $width={32} aria-label="Zoom out">
              <StrokeIcon d="M2 9h14" />
            </IconButton>
            <ZoomLabel>ZOOM</ZoomLabel>
            <IconButton $width={32} aria-label="Zoom in">
              <StrokeIcon d="M2 9h14M9 2v14" />
            </IconButton>
            <Dots $before={16} />
            <IconButton $width={60} aria-label="Full screen">
              <StrokeIcon d="M2 16L16 2M10 1.500h6.500V8M1.500 10v6.500H8" />
            </IconButton>
            <Dots />
          </ViewerToolbar>

          <PdfPane>
            <SheetScroller>
              <Sheet>
                <Heading>Experiment Part 3:</Heading>

                <Step $top={10}>
                  <span>3.1</span>
                  <p>
                    How you would set up the experiment to observe the cart speeding up
                    <br />
                    while moving towards the MD.&nbsp; As in Part 1, the +x direction should point
                    <br />
                    roughly toward the right.
                  </p>
                </Step>

                <Question $top={8}>
                  <strong>Q3.1</strong>
                  <Answer $height={188}>Draw a picture of the experimental setup.</Answer>
                </Question>

                <Question $top={21}>
                  <strong>P3.1</strong>
                  <Answer $height={207}>
                    Predict what the graphs of <b>x</b> vs. t, <b>v</b> vs. t and <b>a</b> vs. t will look like for the
                    <br />
                    moving cart in this situation.&nbsp; Draw rough sketches.
                    <svg width="528" height="160" viewBox="0 0 528 160" fontFamily={serifFont} fontSize="12">
                      {sketches.map(({ name, left, axis }) => (
                        <g key={name}>
                          <text x={left - 21} y="21">
                            {name}
                          </text>
                          <path d={`M${left}.500 12v122M${left} ${axis + 12}.500h122`} stroke="#222" strokeWidth="1.400" />
                          <text x={left + 110} y={axis + 26}>
                            t
                          </text>
                        </g>
                      ))}
                    </svg>
                  </Answer>
                </Question>

                <Step $top={11}>
                  <span>3.2</span>
                  <p>
                    Now watch the video as an instructor collects data while doing the
                    <br />
                    experiment.
                  </p>
                  <VideoLink href="https://youtu.be/GAWbVYAA-7o">https://youtu.be/GAWbVYAA-7o</VideoLink>
                </Step>

                <Question $top={29}>
                  <strong>Q3.2</strong>
                  <Answer $height={348}>
                    Here are the graphs for this experiment.
                    <ChartSvg width="519" height="306" viewBox="0 0 519 306">
                      <path d="M0 0h519v306H0z" fill="#ccf" />
                      {charts.map(chart => (
                        <Chart key={chart.name} {...chart} />
                      ))}
                    </ChartSvg>
                  </Answer>
                </Question>

                <Footer>
                  <span>©2012 by Mangala Joshua</span>
                  <span>
                    Mesa Community College
                    <br />
                    Mesa, Arizona&nbsp; 85202
                  </span>
                  <span>Page 2.5</span>
                </Footer>
              </Sheet>
            </SheetScroller>
            <Scrollbar $width={17}>
              <Arrow />
              <Track $before={560} $after={412}>
                <Thumb $size={118} />
              </Track>
              <Arrow down />
            </Scrollbar>
          </PdfPane>
        </Viewer>
        <Scrollbar $width={16} $arrow="#8a8a8a">
          <Arrow />
          <Track>
            <Thumb $size={1} />
          </Track>
          <Arrow down />
        </Scrollbar>
      </Page>

      <Taskbar>
        <Weather>
          <MoonIcon />
          <span>
            85°F
            <small>Clear</small>
          </span>
        </Weather>
        <Apps>
          <AppButton aria-label="Start">
            <WindowsIcon />
          </AppButton>
          <SearchPill>
            <Search size={15} strokeWidth={2.4} />
            Search
          </SearchPill>
          {apps.map(({ name, icon, active, running, badge, badgeColor }) => (
            <AppButton key={name} aria-label={name} $active={active} $running={running}>
              {icon}
              {badge && <Badge $color={badgeColor}>{badge}</Badge>}
            </AppButton>
          ))}
        </Apps>
        <Tray>
          <ChevronUp size={16} strokeWidth={2} />
          <SyncIcon />
          <Wifi size={18} strokeWidth={2} />
          <VolumeIcon />
          <Clock>
            11:44 PM
            <br />
            6/3/2023
          </Clock>
        </Tray>
      </Taskbar>
    </Screen>
  );
};

export default App;
